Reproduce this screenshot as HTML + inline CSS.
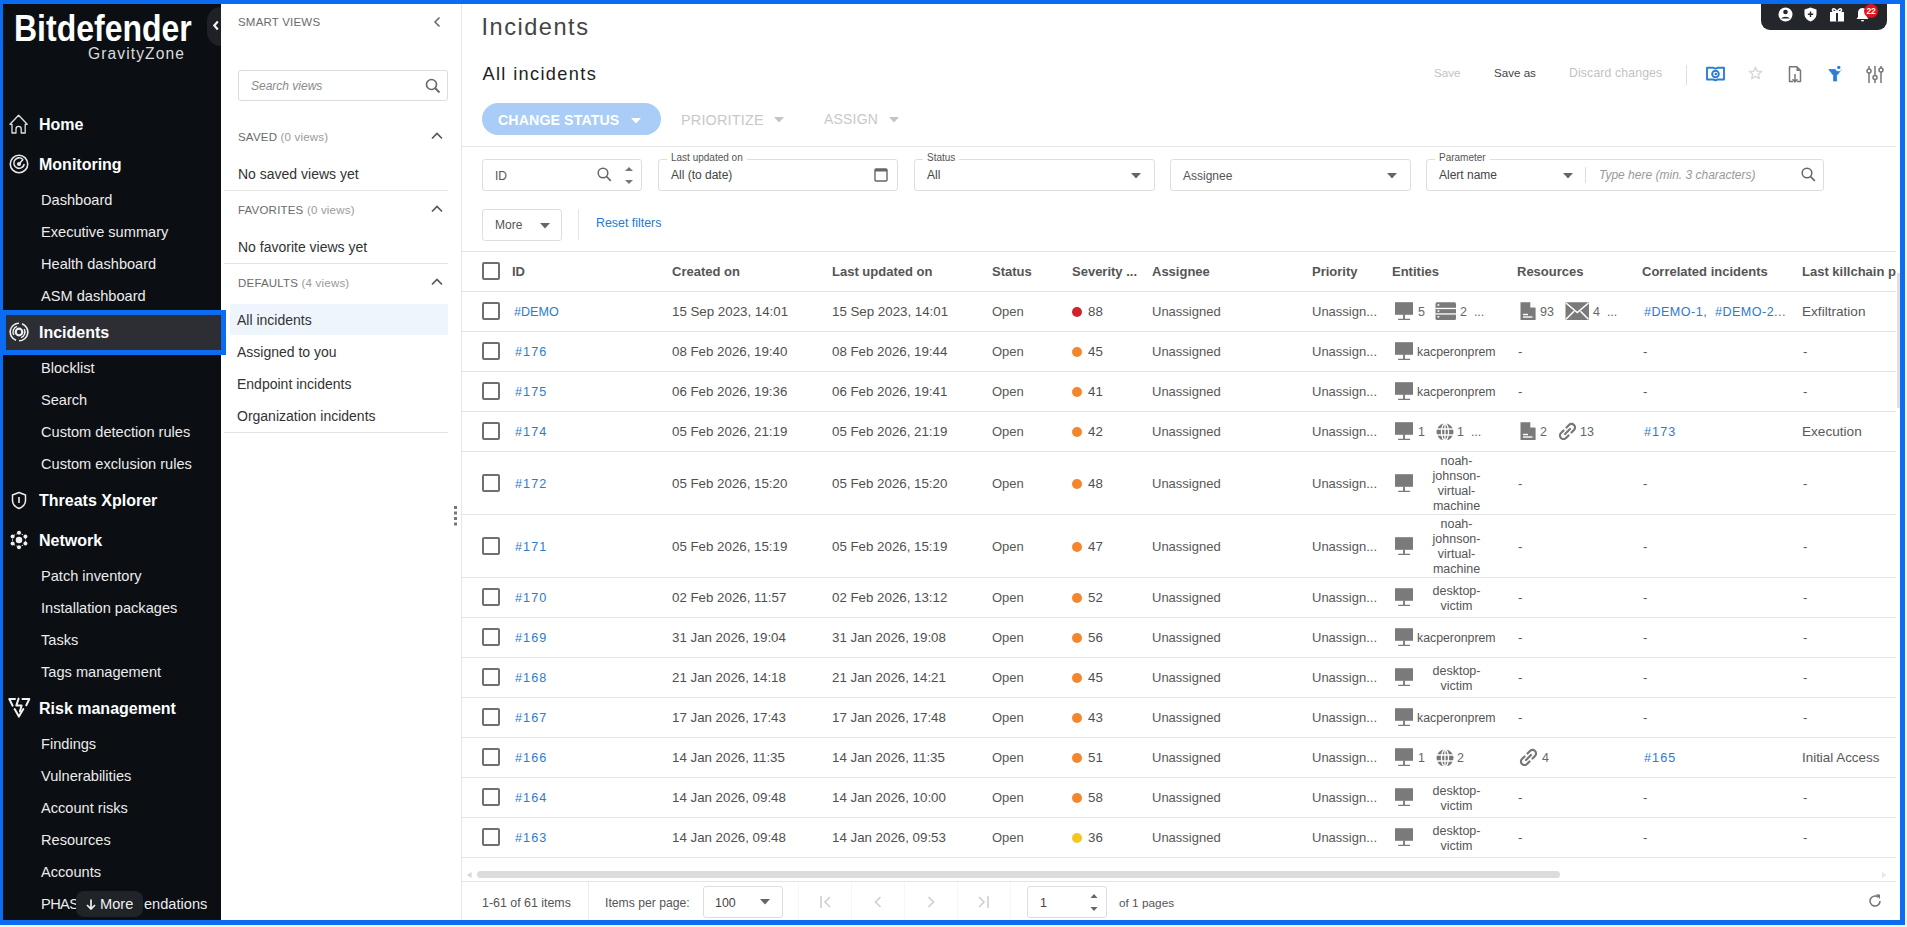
<!DOCTYPE html>
<html><head><meta charset="utf-8">
<style>
*{box-sizing:border-box;margin:0;padding:0}
html,body{width:1907px;height:927px;overflow:hidden;background:#e9fcfc;font-family:"Liberation Sans",sans-serif}
.a{position:absolute;white-space:nowrap}
#frame{position:absolute;left:0;top:0;width:1905px;height:925px;background:#0b6cf2}
#app{position:absolute;left:3px;top:4px;width:1897px;height:916px;background:#fff;overflow:hidden}
/* sidebar */
#side{z-index:3;position:absolute;left:0;top:0;width:218px;height:916px;background:#0b0e13;color:#fff}
#side .t{position:absolute;left:36px;font-weight:bold;font-size:16px;line-height:20px;height:20px;color:#fff;margin-top:1px}
#side .s{position:absolute;left:38px;font-size:14.6px;line-height:20px;height:20px;color:#ececec}
#side svg{position:absolute}
/* smart views */
#sv{z-index:1;position:absolute;left:218px;top:0;width:241px;height:916px;background:#fff;border-right:1px solid #e6e6e6}
#sv .h{position:absolute;left:17px;font-size:11.5px;line-height:16px;color:#6b6b6b;letter-spacing:.2px}
#sv .h span{color:#9a9a9a}
#sv .i{position:absolute;left:17px;font-size:14px;line-height:18px;color:#333}
#sv .ln{position:absolute;left:3px;width:224px;height:1px;background:#e3e3e3}
#sv svg{position:absolute}
/* main */
.box{position:absolute;border:1px solid #dedede;border-radius:3px;background:#fff}
.ft{font-size:12px;line-height:16px}
.lbl{font-size:10px;line-height:12px;color:#555;background:#fff;padding:0 4px}
.hl{left:1px;width:1434px;height:1px;background:#e4e4e4}
.cb{position:absolute;width:18px;height:18px;border:2px solid #6f6f6f;border-radius:2px}
.th{font-size:13px;font-weight:bold;line-height:18px;color:#555}
.td{font-size:13.3px;line-height:18px;color:#505050}
.st{font-size:13px;color:#585858}
.lk{color:#2b7bd3;font-size:12.6px}
.lkn{letter-spacing:1.1px}
.sm{font-size:12.5px;color:#666}
.ent{font-size:12.3px;color:#555}
.ent2{position:absolute;font-size:12.5px;color:#555;text-align:center}
.dot{position:absolute;width:10px;height:10px;border-radius:50%}
#main{position:absolute;left:458px;top:0;width:1439px;height:916px;background:#fff}
</style></head><body>
<div id="frame"></div>
<div id="app">
 <div id="side">
  <div class="a" style="left:11px;top:3px;font-size:32px;font-weight:bold;color:#fff;line-height:36px;transform:scaleY(1.16);transform-origin:0 0">Bitdefender</div>
  <div class="a" style="left:85px;top:40px;font-size:15.6px;color:#dcdcdc;line-height:20px;letter-spacing:1.1px">GravityZone</div>
  <div class="a" style="left:204px;top:3px;width:14px;height:39px;background:#1e2126;border-radius:14px 0 0 14px"></div>
  <svg style="left:209px;top:16px" width="8" height="11" viewBox="0 0 8 11"><path d="M5.8 1.5L2.3 5.5L5.8 9.5" stroke="#f4f4f4" stroke-width="2.2" fill="none"/></svg>

  <!-- icons -->
  <svg style="left:6px;top:110px" width="20" height="20" viewBox="0 0 20 20"><path d="M3 19V10.3H1L9.6 1.2L18.2 10.3H16.2V19H12.2V15A2.6 2.6 0 0 0 7 15V19Z" stroke="#e0e0e0" stroke-width="1.3" fill="none" stroke-linejoin="round"/></svg>
  <div class="t" style="top:110px">Home</div>
  <svg style="left:6px;top:150px" width="20" height="20" viewBox="0 0 19 19"><circle cx="9.5" cy="9.5" r="8.3" stroke="#e8e8e8" stroke-width="1.5" fill="none"/><path d="M13 5A5 5 0 1 0 14.5 9.5" stroke="#e8e8e8" stroke-width="1.5" fill="none"/><circle cx="9.5" cy="9.5" r="2" fill="#e8e8e8"/><path d="M9.5 9.5L13.5 5" stroke="#e8e8e8" stroke-width="1.5"/></svg>
  <div class="t" style="top:150px">Monitoring</div>
  <div class="s" style="top:186px">Dashboard</div>
  <div class="s" style="top:218px">Executive summary</div>
  <div class="s" style="top:250px">Health dashboard</div>
  <div class="s" style="top:282px">ASM dashboard</div>

  <div class="a" style="left:-2px;top:306px;width:225px;height:45px;border:5px solid #0b6cf2;background:#2c2e33"></div>
  <svg style="left:6px;top:318px" width="20" height="20" viewBox="0 0 20 20"><g stroke="#f0f0f0" fill="none"><path d="M13.01 1.73A8.8 8.8 0 0 1 10.0 18.8M6.99 18.27A8.8 8.8 0 0 1 10.0 1.2" stroke-width="1.6"/><path d="M4.8 13.0A6.0 6.0 0 0 1 7.95 4.36M15.2 7.0A6.0 6.0 0 0 1 12.05 15.64" stroke-width="1.4"/><circle cx="10" cy="10" r="3.3" stroke-width="2.2"/></g></svg>
  <div class="t" style="top:318px">Incidents</div>
  <div class="s" style="top:354px">Blocklist</div>
  <div class="s" style="top:386px">Search</div>
  <div class="s" style="top:418px">Custom detection rules</div>
  <div class="s" style="top:450px">Custom exclusion rules</div>

  <svg style="left:8px;top:487px" width="16" height="19" viewBox="0 0 16 19"><path d="M8 1.5L14.5 4V9.5C14.5 13.5 11.5 16 8 17.5C4.5 16 1.5 13.5 1.5 9.5V4Z" stroke="#eee" stroke-width="1.5" fill="none" stroke-linejoin="round"/><rect x="7.2" y="6" width="1.6" height="6" fill="#eee"/></svg>
  <div class="t" style="top:486px">Threats Xplorer</div>
  <svg style="left:6px;top:526px" width="20" height="20" viewBox="0 0 20 20"><path d="M10 2.5L16.5 6.25V13.75L10 17.5L3.5 13.75V6.25Z" stroke="#cfcfcf" stroke-width="1" stroke-dasharray="1.6 1.4" fill="none"/><g fill="#f0f0f0"><circle cx="10" cy="10" r="3.3"/><circle cx="10" cy="2.8" r="2"/><circle cx="10" cy="17.2" r="2"/><circle cx="3.6" cy="6.4" r="2"/><circle cx="16.4" cy="6.4" r="2"/><circle cx="3.6" cy="13.6" r="2"/><circle cx="16.4" cy="13.6" r="2"/></g></svg>
  <div class="t" style="top:526px">Network</div>
  <div class="s" style="top:562px">Patch inventory</div>
  <div class="s" style="top:594px">Installation packages</div>
  <div class="s" style="top:626px">Tasks</div>
  <div class="s" style="top:658px">Tags management</div>

  <svg style="left:4px;top:692px" width="25" height="23" viewBox="0 0 25 23"><g stroke="#f2f2f2" stroke-width="2" fill="none" stroke-linejoin="round" stroke-linecap="round"><path d="M8 3H2.3L5.6 9.8"/><path d="M15.5 3H22.3L19.3 9.3"/><path d="M7.6 13L11.9 20.6L16.3 13"/><path d="M11.6 2.6L9.3 9.6H14.6L12.9 15.6"/></g></svg>
  <div class="t" style="top:694px">Risk management</div>
  <div class="s" style="top:730px">Findings</div>
  <div class="s" style="top:762px">Vulnerabilities</div>
  <div class="s" style="top:794px">Account risks</div>
  <div class="s" style="top:826px">Resources</div>
  <div class="s" style="top:858px">Accounts</div>
  <div class="s" style="top:890px;letter-spacing:-0.6px">PHAS</div>
  <div class="s" style="top:890px;left:141px">endations</div>
  <div class="a" style="left:73px;top:887px;width:67px;height:26px;border-radius:8px;background:#202328;color:#f0f0f0;font-size:14.6px;line-height:26px;padding-left:10px"><svg style="position:absolute;left:10px;top:8px" width="10" height="11" viewBox="0 0 10 11"><path d="M5 0.5V10M1 6L5 10L9 6" stroke="#f0f0f0" stroke-width="1.7" fill="none"/></svg><span style="margin-left:14px">More</span></div>
 </div>

 <div id="sv">
  <div class="h" style="top:10px">SMART VIEWS</div>
  <svg style="left:212px;top:12px" width="8" height="12" viewBox="0 0 8 12"><path d="M6.5 1.5L2 6L6.5 10.5" stroke="#666" stroke-width="1.5" fill="none"/></svg>
  <div class="a" style="left:17px;top:66px;width:210px;height:31px;border:1px solid #dcdcdc;border-radius:3px"></div>
  <div class="a" style="left:30px;top:74px;font-size:12px;font-style:italic;color:#8a8a8a;line-height:16px">Search views</div>
  <svg style="left:204px;top:74px" width="16" height="16" viewBox="0 0 16 16"><circle cx="6.5" cy="6.5" r="5" stroke="#666" stroke-width="1.6" fill="none"/><path d="M10 10L14.5 14.5" stroke="#666" stroke-width="1.8"/></svg>

  <div class="h" style="top:125px">SAVED <span>(0 views)</span></div>
  <svg style="left:210px;top:128px" width="12" height="8" viewBox="0 0 12 8"><path d="M1 6.5L6 1.5L11 6.5" stroke="#555" stroke-width="1.6" fill="none"/></svg>
  <div class="i" style="top:161px">No saved views yet</div>
  <div class="ln" style="top:186px"></div>
  <div class="h" style="top:198px">FAVORITES <span>(0 views)</span></div>
  <svg style="left:210px;top:201px" width="12" height="8" viewBox="0 0 12 8"><path d="M1 6.5L6 1.5L11 6.5" stroke="#555" stroke-width="1.6" fill="none"/></svg>
  <div class="i" style="top:234px">No favorite views yet</div>
  <div class="ln" style="top:259px"></div>
  <div class="h" style="top:271px">DEFAULTS <span>(4 views)</span></div>
  <svg style="left:210px;top:274px" width="12" height="8" viewBox="0 0 12 8"><path d="M1 6.5L6 1.5L11 6.5" stroke="#555" stroke-width="1.6" fill="none"/></svg>
  <div class="a" style="left:9px;top:300px;width:218px;height:31px;background:#eef5fd"></div>
  <div class="i" style="left:16px;top:307px">All incidents</div>
  <div class="i" style="left:16px;top:339px">Assigned to you</div>
  <div class="i" style="left:16px;top:371px">Endpoint incidents</div>
  <div class="i" style="left:16px;top:403px">Organization incidents</div>
  <div class="ln" style="top:428px"></div>
  <svg style="left:233px;top:502px" width="4" height="20" viewBox="0 0 4 20"><g fill="#777"><rect x="0" y="0" width="3" height="3"/><rect x="0" y="5.5" width="3" height="3"/><rect x="0" y="11" width="3" height="3"/><rect x="0" y="16.5" width="3" height="3"/></g></svg>
 </div>

 <div id="main">
    <div class="a" style="left:20.5px;top:8.5px;font-size:23.6px;line-height:28px;color:#444;letter-spacing:1.5px">Incidents</div>
  <div class="a" style="left:21.5px;top:58px;font-size:18.2px;line-height:24px;color:#1e1e1e;letter-spacing:1.35px">All incidents</div>
  <div class="a" style="left:973px;top:61px;font-size:11.6px;line-height:16px;color:#c2c2c2">Save</div>
  <div class="a" style="left:1033px;top:61px;font-size:11.6px;line-height:16px;color:#444">Save as</div>
  <div class="a" style="left:1108px;top:61px;font-size:12.2px;line-height:16px;color:#c2c2c2;letter-spacing:0.17px">Discard changes</div>
  <div class="a" style="left:1225px;top:61px;width:1px;height:20px;background:#e0e0e0"></div>
  <!-- toolbar icons -->
  <svg class="a" style="left:1245px;top:62px" width="19" height="16" viewBox="0 0 19 16"><path d="M1 1.8H7.5L9.5 2.6L11.5 1.8H18V13.5H11.5L9.5 14.3L7.5 13.5H1Z" stroke="#2b7fd6" stroke-width="1.9" fill="none" stroke-linejoin="round"/><circle cx="9.5" cy="8" r="3.3" stroke="#2b7fd6" stroke-width="2" fill="none"/><circle cx="9.8" cy="8" r="1.3" fill="#2b7fd6"/></svg>
  <svg class="a" style="left:1287px;top:62px" width="15" height="14" viewBox="0 0 15 14"><path d="M7.5 1.2L9.3 5.2L13.6 5.5L10.3 8.3L11.3 12.6L7.5 10.3L3.7 12.6L4.7 8.3L1.4 5.5L5.7 5.2Z" stroke="#d8d8d8" stroke-width="1.5" fill="none" stroke-linejoin="round"/></svg>
  <svg class="a" style="left:1326px;top:61px" width="16" height="18" viewBox="0 0 16 18"><path d="M6 16.5H2.5V1.8H9.8L13.5 5.5V16.5H10" stroke="#777" stroke-width="1.5" fill="none" stroke-linejoin="round"/><path d="M9.5 2V6H13.5Z" fill="#777"/><path d="M8 9V17M5.5 14.2L8 16.8L10.5 14.2" stroke="#777" stroke-width="1.5" fill="none"/></svg>
  <svg class="a" style="left:1367px;top:61px" width="15" height="17" viewBox="0 0 15 17"><path d="M0.8 4.5H13.5L8.6 10.5V16H5.6V10.5Z" fill="#2b7fd6" stroke="#2b7fd6" stroke-width="0.8" stroke-linejoin="round"/><circle cx="10.6" cy="3" r="3.2" fill="#fff"/><circle cx="10.8" cy="2.4" r="1.7" fill="#2b7fd6"/></svg>
  <svg class="a" style="left:1405px;top:61px" width="18" height="19" viewBox="0 0 18 19"><g stroke="#777" stroke-width="1.5" fill="#fff"><path d="M3 1V18M9 1V18M15 1V18"/><circle cx="3" cy="6" r="2"/><circle cx="9" cy="12.5" r="2"/><circle cx="15" cy="5" r="2"/></g></svg>

  <div class="a" style="left:21px;top:99px;width:179px;height:32px;border-radius:16px;background:#a9cdf6"></div>
  <div class="a" style="left:37px;top:108px;font-size:14.2px;font-weight:bold;line-height:16px;color:#fff;letter-spacing:0.1px">CHANGE STATUS</div>
  <svg class="a" style="left:170px;top:114px" width="10" height="6" viewBox="0 0 10 6"><path d="M0 0H10L5 5.5Z" fill="#fff"/></svg>
  <div class="a" style="left:220px;top:108px;font-size:14.4px;line-height:16px;color:#c8c8c8;letter-spacing:0.2px">PRIORITIZE</div>
  <svg class="a" style="left:313px;top:113px" width="10" height="6" viewBox="0 0 10 6"><path d="M0 0H10L5 5.5Z" fill="#c4c4c4"/></svg>
  <div class="a" style="left:363px;top:107px;font-size:14px;line-height:16px;color:#c8c8c8;letter-spacing:0.2px">ASSIGN</div>
  <svg class="a" style="left:428px;top:113px" width="10" height="6" viewBox="0 0 10 6"><path d="M0 0H10L5 5.5Z" fill="#c4c4c4"/></svg>
  <div class="a" style="left:1px;top:142px;width:1434px;height:1px;background:#e6e6e6"></div>

  <!-- filters -->
  <div class="box" style="left:21px;top:155px;width:160px;height:32px"></div>
  <div class="a ft" style="left:34px;top:164px;color:#555">ID</div>
  <svg class="a" style="left:136px;top:163px" width="15" height="15" viewBox="0 0 15 15"><circle cx="6" cy="6" r="4.8" stroke="#666" stroke-width="1.5" fill="none"/><path d="M9.5 9.5L13.8 13.8" stroke="#666" stroke-width="1.7"/></svg>
  <svg class="a" style="left:163px;top:163px" width="10" height="18" viewBox="0 0 10 18"><path d="M1 4H9L5 0Z" fill="#777"/><path d="M1 13H9L5 17Z" fill="#777"/></svg>

  <div class="box" style="left:197px;top:155px;width:240px;height:32px"></div>
  <div class="a lbl" style="left:206px;top:148px">Last updated on</div>
  <div class="a ft" style="left:210px;top:163px;color:#444">All (to date)</div>
  <svg class="a" style="left:413px;top:163px" width="14" height="15" viewBox="0 0 14 15"><rect x="1" y="2" width="12" height="12" rx="1" stroke="#666" stroke-width="1.4" fill="none"/><rect x="1" y="2" width="12" height="2.5" fill="#666"/></svg>

  <div class="box" style="left:453px;top:155px;width:241px;height:32px"></div>
  <div class="a lbl" style="left:462px;top:148px">Status</div>
  <div class="a ft" style="left:466px;top:163px;color:#444">All</div>
  <svg class="a" style="left:670px;top:169px" width="10" height="6" viewBox="0 0 10 6"><path d="M0 0H10L5 5.5Z" fill="#666"/></svg>

  <div class="box" style="left:709px;top:155px;width:241px;height:32px"></div>
  <div class="a ft" style="left:722px;top:164px;color:#555">Assignee</div>
  <svg class="a" style="left:926px;top:169px" width="10" height="6" viewBox="0 0 10 6"><path d="M0 0H10L5 5.5Z" fill="#666"/></svg>

  <div class="box" style="left:965px;top:155px;width:398px;height:32px"></div>
  <div class="a lbl" style="left:974px;top:148px">Parameter</div>
  <div class="a ft" style="left:978px;top:163px;color:#444">Alert name</div>
  <svg class="a" style="left:1102px;top:169px" width="10" height="6" viewBox="0 0 10 6"><path d="M0 0H10L5 5.5Z" fill="#666"/></svg>
  <div class="a" style="left:1124px;top:163px;width:1px;height:16px;background:#ddd"></div>
  <div class="a ft" style="left:1138px;top:163px;color:#999;font-style:italic">Type here (min. 3 characters)</div>
  <svg class="a" style="left:1340px;top:163px" width="15" height="15" viewBox="0 0 15 15"><circle cx="6" cy="6" r="4.8" stroke="#666" stroke-width="1.5" fill="none"/><path d="M9.5 9.5L13.8 13.8" stroke="#666" stroke-width="1.7"/></svg>

  <div class="box" style="left:21px;top:205px;width:80px;height:32px"></div>
  <div class="a ft" style="left:34px;top:213px;color:#555">More</div>
  <svg class="a" style="left:79px;top:219px" width="10" height="6" viewBox="0 0 10 6"><path d="M0 0H10L5 5.5Z" fill="#666"/></svg>
  <div class="a" style="left:117px;top:205px;width:1px;height:31px;background:#e3e3e3"></div>
  <div class="a ft" style="left:135px;top:211px;color:#2a78d0;font-size:12.4px">Reset filters</div>

  <svg width="0" height="0" style="position:absolute"><defs>
   <g id="i-mon"><rect x="1" y="0.2" width="18.2" height="12.6" fill="#7a7a7a"/><rect x="9.1" y="12.5" width="1.9" height="5" fill="#7a7a7a"/><rect x="4" y="16.8" width="12.2" height="1.4" rx="0.7" fill="#7a7a7a"/></g>
   <g id="i-srv"><rect x="0.5" y="0.3" width="20.5" height="17.7" rx="1.5" fill="#7a7a7a"/><rect x="0.5" y="5.8" width="20.5" height="1.3" fill="#fff"/><rect x="0.5" y="11.3" width="20.5" height="1.3" fill="#fff"/><rect x="2.5" y="2.2" width="1.8" height="1.6" fill="#fff"/><rect x="2.5" y="8.2" width="1.8" height="1.6" fill="#fff"/><rect x="2.5" y="14" width="1.8" height="1.6" fill="#fff"/></g>
   <g id="i-doc"><path d="M0.5 0.3H10L15.6 5.9V18H0.5Z" fill="#7a7a7a"/><path d="M10.3 0.3V5.6H15.6Z" fill="#fff"/><rect x="3" y="11.8" width="5" height="1.4" fill="#fff"/><rect x="3" y="14.3" width="9.5" height="1.4" fill="#fff"/></g>
   <g id="i-env"><rect x="0.5" y="0.3" width="23.5" height="17.7" rx="1" fill="#7a7a7a"/><path d="M1 1L12.25 10.5L23.5 1M1 17.3L9 9.2M23.5 17.3L15.5 9.2" stroke="#fff" stroke-width="1.6" fill="none"/></g>
   <g id="i-glb"><circle cx="10" cy="10" r="8.5" fill="#777"/><g stroke="#fff" stroke-width="1.3" fill="none"><ellipse cx="10" cy="10" rx="3.5" ry="8.5"/><path d="M1.5 7H18.5M1.5 13H18.5M10 1.5V18.5"/></g></g>
   <g id="i-lnk"><g stroke="#777" stroke-width="2.2" fill="none" stroke-linecap="round"><path d="M8.5 5.5L11 3A3.3 3.3 0 0 1 16 8L13.5 10.5"/><path d="M10.5 13.5L8 16A3.3 3.3 0 0 1 3 11L5.5 8.5"/><path d="M7 12L12 7"/></g></g>
  </defs></svg>
  <!--TABLE-->
<div class="a hl" style="top:247px"></div>
<div class="cb" style="left:21px;top:258px"></div>
<div class="a th" style="left:51px;top:259px">ID</div>
<div class="a th" style="left:211px;top:259px">Created on</div>
<div class="a th" style="left:371px;top:259px">Last updated on</div>
<div class="a th" style="left:531px;top:259px">Status</div>
<div class="a th" style="left:611px;top:259px">Severity ...</div>
<div class="a th" style="left:691px;top:259px">Assignee</div>
<div class="a th" style="left:851px;top:259px">Priority</div>
<div class="a th" style="left:931px;top:259px">Entities</div>
<div class="a th" style="left:1056px;top:259px">Resources</div>
<div class="a th" style="left:1181px;top:259px">Correlated incidents</div>
<div class="a th" style="left:1341px;top:259px">Last killchain p</div>
<div class="a hl" style="top:287px"></div>
<div class="a hl" style="top:327px"></div>
<div class="a hl" style="top:367px"></div>
<div class="a hl" style="top:407px"></div>
<div class="a hl" style="top:447px"></div>
<div class="a hl" style="top:510px"></div>
<div class="a hl" style="top:573px"></div>
<div class="a hl" style="top:613px"></div>
<div class="a hl" style="top:653px"></div>
<div class="a hl" style="top:693px"></div>
<div class="a hl" style="top:733px"></div>
<div class="a hl" style="top:773px"></div>
<div class="a hl" style="top:813px"></div>
<div class="a hl" style="top:853px"></div>
<div class="cb" style="left:21px;top:298.0px"></div>
<div class="a td lk" style="left:53px;top:299.0px">#DEMO</div>
<div class="a td" style="left:211px;top:299.0px">15 Sep 2023, 14:01</div>
<div class="a td" style="left:371px;top:299.0px">15 Sep 2023, 14:01</div>
<div class="a td st" style="left:531px;top:299.0px">Open</div>
<div class="a dot" style="left:611px;top:303.0px;background:#d3222f"></div>
<div class="a td" style="left:627px;top:299.0px">88</div>
<div class="a td st" style="left:691px;top:299.0px">Unassigned</div>
<div class="a td st" style="left:851px;top:299.0px">Unassign...</div>
<svg class="a" style="left:933px;top:298.0px" width="19" height="18"><use href="#i-mon"/></svg>
<div class="a td sm" style="left:957px;top:299.0px">5</div>
<svg class="a" style="left:974px;top:298.0px" width="21" height="18"><use href="#i-srv"/></svg>
<div class="a td sm" style="left:999px;top:299.0px">2 &nbsp;...</div>
<svg class="a" style="left:1059px;top:298.0px" width="16" height="18"><use href="#i-doc"/></svg>
<div class="a td sm" style="left:1079px;top:299.0px">93</div>
<svg class="a" style="left:1104px;top:298.0px" width="24" height="18"><use href="#i-env"/></svg>
<div class="a td sm" style="left:1132px;top:299.0px">4 &nbsp;...</div>
<div class="a td lk" style="left:1183px;top:299.0px; letter-spacing:0.45px">#DEMO-1, &nbsp;#DEMO-2...</div>
<div class="a td st" style="left:1341px;top:299.0px; font-size:13.6px">Exfiltration</div>
<div class="cb" style="left:21px;top:338.0px"></div>
<div class="a td lk lkn" style="left:54px;top:339.0px">#176</div>
<div class="a td" style="left:211px;top:339.0px">08 Feb 2026, 19:40</div>
<div class="a td" style="left:371px;top:339.0px">08 Feb 2026, 19:44</div>
<div class="a td st" style="left:531px;top:339.0px">Open</div>
<div class="a dot" style="left:611px;top:343.0px;background:#f5862b"></div>
<div class="a td" style="left:627px;top:339.0px">45</div>
<div class="a td st" style="left:691px;top:339.0px">Unassigned</div>
<div class="a td st" style="left:851px;top:339.0px">Unassign...</div>
<svg class="a" style="left:933px;top:338.0px" width="19" height="18"><use href="#i-mon"/></svg>
<div class="a td ent" style="left:956px;top:339.0px">kacperonprem</div>
<div class="a td st" style="left:1057px;top:339.0px">-</div>
<div class="a td st" style="left:1182px;top:339.0px">-</div>
<div class="a td st" style="left:1342px;top:339.0px">-</div>
<div class="cb" style="left:21px;top:378.0px"></div>
<div class="a td lk lkn" style="left:54px;top:379.0px">#175</div>
<div class="a td" style="left:211px;top:379.0px">06 Feb 2026, 19:36</div>
<div class="a td" style="left:371px;top:379.0px">06 Feb 2026, 19:41</div>
<div class="a td st" style="left:531px;top:379.0px">Open</div>
<div class="a dot" style="left:611px;top:383.0px;background:#f5862b"></div>
<div class="a td" style="left:627px;top:379.0px">41</div>
<div class="a td st" style="left:691px;top:379.0px">Unassigned</div>
<div class="a td st" style="left:851px;top:379.0px">Unassign...</div>
<svg class="a" style="left:933px;top:378.0px" width="19" height="18"><use href="#i-mon"/></svg>
<div class="a td ent" style="left:956px;top:379.0px">kacperonprem</div>
<div class="a td st" style="left:1057px;top:379.0px">-</div>
<div class="a td st" style="left:1182px;top:379.0px">-</div>
<div class="a td st" style="left:1342px;top:379.0px">-</div>
<div class="cb" style="left:21px;top:418.0px"></div>
<div class="a td lk lkn" style="left:54px;top:419.0px">#174</div>
<div class="a td" style="left:211px;top:419.0px">05 Feb 2026, 21:19</div>
<div class="a td" style="left:371px;top:419.0px">05 Feb 2026, 21:19</div>
<div class="a td st" style="left:531px;top:419.0px">Open</div>
<div class="a dot" style="left:611px;top:423.0px;background:#f5862b"></div>
<div class="a td" style="left:627px;top:419.0px">42</div>
<div class="a td st" style="left:691px;top:419.0px">Unassigned</div>
<div class="a td st" style="left:851px;top:419.0px">Unassign...</div>
<svg class="a" style="left:933px;top:418.0px" width="19" height="18"><use href="#i-mon"/></svg>
<div class="a td sm" style="left:957px;top:419.0px">1</div>
<svg class="a" style="left:974px;top:418.0px" width="19" height="18"><use href="#i-glb"/></svg>
<div class="a td sm" style="left:996px;top:419.0px">1 &nbsp;...</div>
<svg class="a" style="left:1059px;top:418.0px" width="16" height="18"><use href="#i-doc"/></svg>
<div class="a td sm" style="left:1079px;top:419.0px">2</div>
<svg class="a" style="left:1097px;top:418.0px" width="19" height="18"><use href="#i-lnk"/></svg>
<div class="a td sm" style="left:1119px;top:419.0px">13</div>
<div class="a td lk lkn" style="left:1183px;top:419.0px">#173</div>
<div class="a td st" style="left:1341px;top:419.0px; font-size:13.6px">Execution</div>
<div class="cb" style="left:21px;top:469.5px"></div>
<div class="a td lk lkn" style="left:54px;top:470.5px">#172</div>
<div class="a td" style="left:211px;top:470.5px">05 Feb 2026, 15:20</div>
<div class="a td" style="left:371px;top:470.5px">05 Feb 2026, 15:20</div>
<div class="a td st" style="left:531px;top:470.5px">Open</div>
<div class="a dot" style="left:611px;top:474.5px;background:#f5862b"></div>
<div class="a td" style="left:627px;top:470.5px">48</div>
<div class="a td st" style="left:691px;top:470.5px">Unassigned</div>
<div class="a td st" style="left:851px;top:470.5px">Unassign...</div>
<svg class="a" style="left:933px;top:469.5px" width="19" height="18"><use href="#i-mon"/></svg>
<div class="a ent2" style="left:955px;top:450.0px;width:81px;line-height:15px">noah-<br>johnson-<br>virtual-<br>machine</div>
<div class="a td st" style="left:1057px;top:470.5px">-</div>
<div class="a td st" style="left:1182px;top:470.5px">-</div>
<div class="a td st" style="left:1342px;top:470.5px">-</div>
<div class="cb" style="left:21px;top:532.5px"></div>
<div class="a td lk lkn" style="left:54px;top:533.5px">#171</div>
<div class="a td" style="left:211px;top:533.5px">05 Feb 2026, 15:19</div>
<div class="a td" style="left:371px;top:533.5px">05 Feb 2026, 15:19</div>
<div class="a td st" style="left:531px;top:533.5px">Open</div>
<div class="a dot" style="left:611px;top:537.5px;background:#f5862b"></div>
<div class="a td" style="left:627px;top:533.5px">47</div>
<div class="a td st" style="left:691px;top:533.5px">Unassigned</div>
<div class="a td st" style="left:851px;top:533.5px">Unassign...</div>
<svg class="a" style="left:933px;top:532.5px" width="19" height="18"><use href="#i-mon"/></svg>
<div class="a ent2" style="left:955px;top:513.0px;width:81px;line-height:15px">noah-<br>johnson-<br>virtual-<br>machine</div>
<div class="a td st" style="left:1057px;top:533.5px">-</div>
<div class="a td st" style="left:1182px;top:533.5px">-</div>
<div class="a td st" style="left:1342px;top:533.5px">-</div>
<div class="cb" style="left:21px;top:584.0px"></div>
<div class="a td lk lkn" style="left:54px;top:585.0px">#170</div>
<div class="a td" style="left:211px;top:585.0px">02 Feb 2026, 11:57</div>
<div class="a td" style="left:371px;top:585.0px">02 Feb 2026, 13:12</div>
<div class="a td st" style="left:531px;top:585.0px">Open</div>
<div class="a dot" style="left:611px;top:589.0px;background:#f5862b"></div>
<div class="a td" style="left:627px;top:585.0px">52</div>
<div class="a td st" style="left:691px;top:585.0px">Unassigned</div>
<div class="a td st" style="left:851px;top:585.0px">Unassign...</div>
<svg class="a" style="left:933px;top:584.0px" width="19" height="18"><use href="#i-mon"/></svg>
<div class="a ent2" style="left:955px;top:579.5px;width:81px;line-height:15px">desktop-<br>victim</div>
<div class="a td st" style="left:1057px;top:585.0px">-</div>
<div class="a td st" style="left:1182px;top:585.0px">-</div>
<div class="a td st" style="left:1342px;top:585.0px">-</div>
<div class="cb" style="left:21px;top:624.0px"></div>
<div class="a td lk lkn" style="left:54px;top:625.0px">#169</div>
<div class="a td" style="left:211px;top:625.0px">31 Jan 2026, 19:04</div>
<div class="a td" style="left:371px;top:625.0px">31 Jan 2026, 19:08</div>
<div class="a td st" style="left:531px;top:625.0px">Open</div>
<div class="a dot" style="left:611px;top:629.0px;background:#f5862b"></div>
<div class="a td" style="left:627px;top:625.0px">56</div>
<div class="a td st" style="left:691px;top:625.0px">Unassigned</div>
<div class="a td st" style="left:851px;top:625.0px">Unassign...</div>
<svg class="a" style="left:933px;top:624.0px" width="19" height="18"><use href="#i-mon"/></svg>
<div class="a td ent" style="left:956px;top:625.0px">kacperonprem</div>
<div class="a td st" style="left:1057px;top:625.0px">-</div>
<div class="a td st" style="left:1182px;top:625.0px">-</div>
<div class="a td st" style="left:1342px;top:625.0px">-</div>
<div class="cb" style="left:21px;top:664.0px"></div>
<div class="a td lk lkn" style="left:54px;top:665.0px">#168</div>
<div class="a td" style="left:211px;top:665.0px">21 Jan 2026, 14:18</div>
<div class="a td" style="left:371px;top:665.0px">21 Jan 2026, 14:21</div>
<div class="a td st" style="left:531px;top:665.0px">Open</div>
<div class="a dot" style="left:611px;top:669.0px;background:#f5862b"></div>
<div class="a td" style="left:627px;top:665.0px">45</div>
<div class="a td st" style="left:691px;top:665.0px">Unassigned</div>
<div class="a td st" style="left:851px;top:665.0px">Unassign...</div>
<svg class="a" style="left:933px;top:664.0px" width="19" height="18"><use href="#i-mon"/></svg>
<div class="a ent2" style="left:955px;top:659.5px;width:81px;line-height:15px">desktop-<br>victim</div>
<div class="a td st" style="left:1057px;top:665.0px">-</div>
<div class="a td st" style="left:1182px;top:665.0px">-</div>
<div class="a td st" style="left:1342px;top:665.0px">-</div>
<div class="cb" style="left:21px;top:704.0px"></div>
<div class="a td lk lkn" style="left:54px;top:705.0px">#167</div>
<div class="a td" style="left:211px;top:705.0px">17 Jan 2026, 17:43</div>
<div class="a td" style="left:371px;top:705.0px">17 Jan 2026, 17:48</div>
<div class="a td st" style="left:531px;top:705.0px">Open</div>
<div class="a dot" style="left:611px;top:709.0px;background:#f5862b"></div>
<div class="a td" style="left:627px;top:705.0px">43</div>
<div class="a td st" style="left:691px;top:705.0px">Unassigned</div>
<div class="a td st" style="left:851px;top:705.0px">Unassign...</div>
<svg class="a" style="left:933px;top:704.0px" width="19" height="18"><use href="#i-mon"/></svg>
<div class="a td ent" style="left:956px;top:705.0px">kacperonprem</div>
<div class="a td st" style="left:1057px;top:705.0px">-</div>
<div class="a td st" style="left:1182px;top:705.0px">-</div>
<div class="a td st" style="left:1342px;top:705.0px">-</div>
<div class="cb" style="left:21px;top:744.0px"></div>
<div class="a td lk lkn" style="left:54px;top:745.0px">#166</div>
<div class="a td" style="left:211px;top:745.0px">14 Jan 2026, 11:35</div>
<div class="a td" style="left:371px;top:745.0px">14 Jan 2026, 11:35</div>
<div class="a td st" style="left:531px;top:745.0px">Open</div>
<div class="a dot" style="left:611px;top:749.0px;background:#f5862b"></div>
<div class="a td" style="left:627px;top:745.0px">51</div>
<div class="a td st" style="left:691px;top:745.0px">Unassigned</div>
<div class="a td st" style="left:851px;top:745.0px">Unassign...</div>
<svg class="a" style="left:933px;top:744.0px" width="19" height="18"><use href="#i-mon"/></svg>
<div class="a td sm" style="left:957px;top:745.0px">1</div>
<svg class="a" style="left:974px;top:744.0px" width="19" height="18"><use href="#i-glb"/></svg>
<div class="a td sm" style="left:996px;top:745.0px">2</div>
<svg class="a" style="left:1058px;top:744.0px" width="19" height="18"><use href="#i-lnk"/></svg>
<div class="a td sm" style="left:1081px;top:745.0px">4</div>
<div class="a td lk lkn" style="left:1183px;top:745.0px">#165</div>
<div class="a td st" style="left:1341px;top:745.0px; font-size:13.4px">Initial Access</div>
<div class="cb" style="left:21px;top:784.0px"></div>
<div class="a td lk lkn" style="left:54px;top:785.0px">#164</div>
<div class="a td" style="left:211px;top:785.0px">14 Jan 2026, 09:48</div>
<div class="a td" style="left:371px;top:785.0px">14 Jan 2026, 10:00</div>
<div class="a td st" style="left:531px;top:785.0px">Open</div>
<div class="a dot" style="left:611px;top:789.0px;background:#f5862b"></div>
<div class="a td" style="left:627px;top:785.0px">58</div>
<div class="a td st" style="left:691px;top:785.0px">Unassigned</div>
<div class="a td st" style="left:851px;top:785.0px">Unassign...</div>
<svg class="a" style="left:933px;top:784.0px" width="19" height="18"><use href="#i-mon"/></svg>
<div class="a ent2" style="left:955px;top:779.5px;width:81px;line-height:15px">desktop-<br>victim</div>
<div class="a td st" style="left:1057px;top:785.0px">-</div>
<div class="a td st" style="left:1182px;top:785.0px">-</div>
<div class="a td st" style="left:1342px;top:785.0px">-</div>
<div class="cb" style="left:21px;top:824.0px"></div>
<div class="a td lk lkn" style="left:54px;top:825.0px">#163</div>
<div class="a td" style="left:211px;top:825.0px">14 Jan 2026, 09:48</div>
<div class="a td" style="left:371px;top:825.0px">14 Jan 2026, 09:53</div>
<div class="a td st" style="left:531px;top:825.0px">Open</div>
<div class="a dot" style="left:611px;top:829.0px;background:#f4c61f"></div>
<div class="a td" style="left:627px;top:825.0px">36</div>
<div class="a td st" style="left:691px;top:825.0px">Unassigned</div>
<div class="a td st" style="left:851px;top:825.0px">Unassign...</div>
<svg class="a" style="left:933px;top:824.0px" width="19" height="18"><use href="#i-mon"/></svg>
<div class="a ent2" style="left:955px;top:819.5px;width:81px;line-height:15px">desktop-<br>victim</div>
<div class="a td st" style="left:1057px;top:825.0px">-</div>
<div class="a td st" style="left:1182px;top:825.0px">-</div>
<div class="a td st" style="left:1342px;top:825.0px">-</div>
<!--/TABLE-->

  <!-- scrollbars -->
  <div class="a" style="left:1436px;top:269px;width:3px;height:135px;background:#e2dfda"></div>
  <svg class="a" style="left:6px;top:868px" width="5" height="6" viewBox="0 0 5 6"><path d="M4.5 0V6L0 3Z" fill="#d6d6d6"/></svg>
  <div class="a" style="left:16px;top:867px;width:1083px;height:7px;border-radius:3.5px;background:#dcdcdc"></div>
  <svg class="a" style="left:1421px;top:868px" width="5" height="6" viewBox="0 0 5 6"><path d="M0 0V6L4.5 3Z" fill="#e6e6e6"/></svg>
  <!-- footer -->
  <div class="a hl" style="top:877px"></div>
  <div class="a" style="left:21px;top:891px;font-size:12.4px;line-height:16px;color:#555">1-61 of 61 items</div>
  <div class="a" style="left:127px;top:878px;width:1px;height:38px;background:#ececec"></div>
  <div class="a" style="left:144px;top:891px;font-size:12.2px;line-height:16px;color:#555">Items per page:</div>
  <div class="box" style="left:242px;top:882px;width:80px;height:32px"></div>
  <div class="a" style="left:254px;top:891px;font-size:12.4px;line-height:16px;color:#444">100</div>
  <svg class="a" style="left:299px;top:895px" width="10" height="6" viewBox="0 0 10 6"><path d="M0 0H10L5 5.5Z" fill="#666"/></svg>
  <div class="a" style="left:337px;top:878px;width:1px;height:38px;background:#f6f6f6"></div>
  <div class="a" style="left:390px;top:878px;width:1px;height:38px;background:#f6f6f6"></div>
  <div class="a" style="left:443px;top:878px;width:1px;height:38px;background:#f6f6f6"></div>
  <div class="a" style="left:496px;top:878px;width:1px;height:38px;background:#f6f6f6"></div>
  <div class="a" style="left:549px;top:878px;width:1px;height:38px;background:#f6f6f6"></div>
  <svg class="a" style="left:358px;top:891px" width="14" height="14" viewBox="0 0 14 14"><path d="M2 1V13M11 2L6 7L11 12" stroke="#cfcfcf" stroke-width="1.6" fill="none"/></svg>
  <svg class="a" style="left:412px;top:891px" width="10" height="14" viewBox="0 0 10 14"><path d="M7.5 2L2.5 7L7.5 12" stroke="#cfcfcf" stroke-width="1.6" fill="none"/></svg>
  <svg class="a" style="left:465px;top:891px" width="10" height="14" viewBox="0 0 10 14"><path d="M2.5 2L7.5 7L2.5 12" stroke="#cfcfcf" stroke-width="1.6" fill="none"/></svg>
  <svg class="a" style="left:515px;top:891px" width="14" height="14" viewBox="0 0 14 14"><path d="M12 1V13M3 2L8 7L3 12" stroke="#cfcfcf" stroke-width="1.6" fill="none"/></svg>
  <div class="box" style="left:566px;top:882px;width:80px;height:32px"></div>
  <div class="a" style="left:579px;top:891px;font-size:12.4px;line-height:16px;color:#444">1</div>
  <svg class="a" style="left:628px;top:889px" width="10" height="20" viewBox="0 0 10 20"><path d="M1.5 5H8.5L5 1Z" fill="#666"/><path d="M1.5 14H8.5L5 18Z" fill="#666"/></svg>
  <div class="a" style="left:658px;top:891px;font-size:11.8px;line-height:16px;color:#555">of 1 pages</div>
  <svg class="a" style="left:1406px;top:889px" width="16" height="16" viewBox="0 0 16 16"><path d="M13 8A5 5 0 1 1 11 4" stroke="#777" stroke-width="1.6" fill="none"/><path d="M8.5 1.5H13V6Z" fill="#777"/></svg>
  <!-- top right toolbar -->
  <div class="a" style="left:1300px;top:0;width:126px;height:26px;background:#23262b;border-radius:0 0 9px 9px"></div>
  <svg class="a" style="left:1317px;top:3px" width="15" height="15" viewBox="0 0 15 15"><circle cx="7.5" cy="7.5" r="7" fill="#fff"/><circle cx="7.5" cy="5" r="2.3" fill="#23262b"/><path d="M3 11.5A5 3.2 0 0 1 12 11.5" fill="#23262b"/></svg>
  <svg class="a" style="left:1343px;top:3px" width="13" height="15" viewBox="0 0 13 15"><path d="M6.5 0.5L12.5 2.5V7C12.5 10.5 10 13 6.5 14.5C3 13 0.5 10.5 0.5 7V2.5Z" fill="#fff"/><path d="M6.5 4.5V10M3.8 7.3H9.2" stroke="#23262b" stroke-width="1.4"/></svg>
  <svg class="a" style="left:1368px;top:3px" width="16" height="15" viewBox="0 0 16 15"><rect x="1" y="5" width="14" height="9.5" fill="#fff"/><path d="M8 5C6 1 3 1 3.5 3.5C4 5 8 5 8 5C8 5 12 5 12.5 3.5C13 1 10 1 8 5Z" stroke="#fff" stroke-width="1.5" fill="none"/><rect x="7" y="6" width="2" height="8.5" fill="#23262b"/></svg>
  <svg class="a" style="left:1394px;top:3px" width="15" height="15" viewBox="0 0 15 15"><path d="M7.5 1A4.5 4.5 0 0 1 12 5.5V10L13.5 12H1.5L3 10V5.5A4.5 4.5 0 0 1 7.5 1Z" fill="#fff"/><path d="M6 13H9A1.5 1.5 0 0 1 6 13Z" fill="#fff"/></svg>
  <div class="a" style="left:1403px;top:0px;width:14px;height:14px;border-radius:7px;background:#e8101a;color:#fff;font-size:8.5px;letter-spacing:-0.3px;font-weight:bold;line-height:14px;text-align:center">22</div>
 </div>
</div>
</body></html>
